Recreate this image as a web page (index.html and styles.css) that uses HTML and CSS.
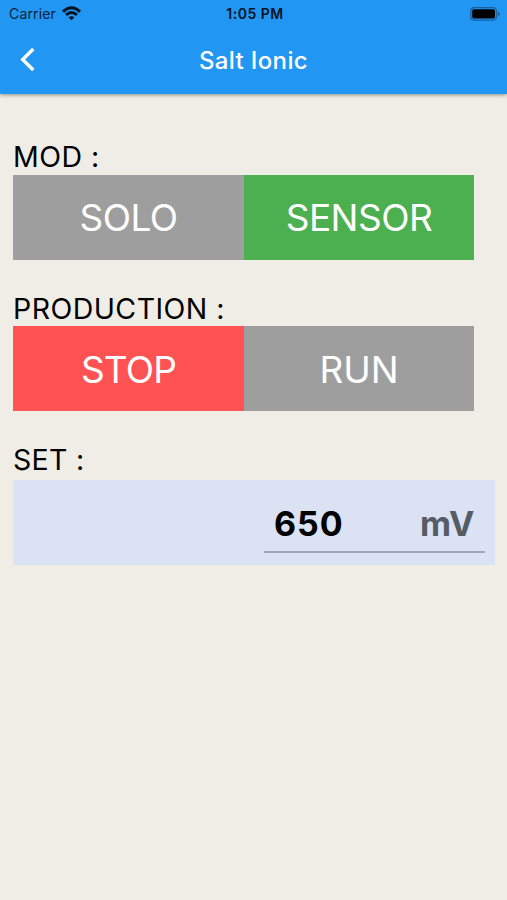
FILE: index.html
```html
<!DOCTYPE html>
<html lang="en">
<head>
<meta charset="utf-8">
<title>Salt Ionic</title>
<link rel="stylesheet" href="styles.css">
</head>
<body>
<header class="top">
  <div class="status">
    <div class="carrier"><span>Carrier</span>
      <svg class="wifi" viewBox="0 0 18 14" width="19" height="15"><g fill="none" stroke="#06131f" stroke-width="2.8"><path d="M.9 5.2Q9-2.2 17.1 5.2"/><path d="M3.8 8.3Q9 3.7 14.2 8.3"/></g><path d="M6.2 10.6Q9 8.4 11.8 10.6L9 13.5Z" fill="#06131f"/></svg>
    </div>
    <span class="time">1:05 PM</span>
    <svg class="battery" viewBox="0 0 31 14" width="31" height="14"><rect x=".7" y=".7" width="25.8" height="12.4" rx="3.6" fill="none" stroke="#185f9d" stroke-width="1.3"/><rect x="2.2" y="2.2" width="22.8" height="9.4" rx="1.8" fill="#000"/><path d="M28 4.8Q30 5.5 30 7T28 9.2Z" fill="#185f9d"/></svg>
  </div>
  <div class="bar">
    <svg class="back" viewBox="0 0 16 26" width="16" height="26"><path d="M13.3 2L2.7 12.5L13.3 23" fill="none" stroke="#fff" stroke-width="3.4"/></svg>
    <h1 class="title">Salt Ionic</h1>
  </div>
</header>
<main class="content">
  <section class="group">
    <h2 class="label">MOD :</h2>
    <div class="toggle"><button class="option gray">SOLO</button><button class="option green">SENSOR</button></div>
  </section>
  <section class="group">
    <h2 class="label production-label">PRODUCTION :</h2>
    <div class="toggle"><button class="option red stop">STOP</button><button class="option gray run">RUN</button></div>
  </section>
  <section class="group">
    <h2 class="label set-label">SET :</h2>
    <div class="setting"><div class="field"><span class="value">650</span><span class="unit">mV</span></div></div>
  </section>
</main>
</body>
</html>
```
FILE: styles.css
```css
* { box-sizing: border-box; }
body { margin: 0; min-height: 900px; background: #f0ede6; font-family: Inter, sans-serif; color: #000; }
.top { height: 94px; background: #2196f3; box-shadow: 0 1px 4px rgba(0,0,0,.4); }
.status { height: 27px; display: grid; grid-template-columns: 1fr auto 1fr; align-items: center; padding: 0 6px 0 9px; font-size: 14px; color: #0b2238; }
.carrier { display: flex; align-items: center; gap: 6px; letter-spacing: .15px; }
.wifi { margin-top: -1px; }
.time { font-weight: 600; letter-spacing: .5px; color: #06131f; }
.battery { justify-self: end; }
.bar { height: 66px; display: grid; grid-template-columns: 40px 1fr 40px; align-items: center; padding: 0 20px; }
.title { margin: 0; text-align: center; font-size: 24px; font-weight: 500; letter-spacing: .35px; color: #fff; }
.content { padding: 44.6px 12px 0 13px; }
.group { height: 151.5px; }
.label { margin: 0; height: 36px; line-height: 36px; font-size: 28.5px; font-weight: 400; letter-spacing: .45px; white-space: nowrap; }
.production-label { line-height: 37px; }
.set-label { height: 38px; letter-spacing: .3px; }
.toggle { width: 461px; height: 85px; display: grid; grid-template-columns: 231px 230px; }
.option { border: 0; padding: 0; font: 400 37px Inter, sans-serif; letter-spacing: -.5px; color: #fff; }
.stop { padding-top: 2px; letter-spacing: -.8px; }
.run { padding-top: 2px; letter-spacing: -.1px; }
.gray { background: #9e9e9e; }
.green { background: #4caf50; }
.red { background: #ff5252; }
.setting { height: 85px; background: #dae2f3; display: flex; justify-content: flex-end; padding: 17px 10px 11.5px; }
.field { width: 221px; display: flex; justify-content: space-between; align-items: center; border-bottom: 2px solid #a1a8b8; padding: 0 11px 0 10px; font-size: 34px; font-weight: 700; }
.value { letter-spacing: 1px; }
.unit { color: #565c66; letter-spacing: -.3px; }
```
